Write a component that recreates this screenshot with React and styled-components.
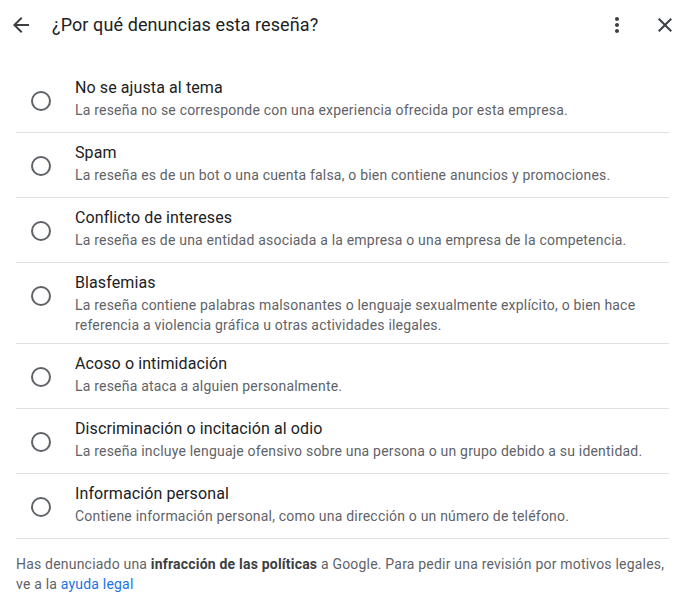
import React from "react";
import styled, { createGlobalStyle } from "styled-components";

const Global = createGlobalStyle`
  html, body { margin: 0; padding: 0; background: #fff; }
  body { font-family: Roboto, "Liberation Sans", Arial, sans-serif; -webkit-font-smoothing: antialiased; }
  * { box-sizing: border-box; }
`;

const Dialog = styled.div`
  width: 678px;
  background: #fff;
`;

const Header = styled.header`
  display: flex;
  align-items: center;
  height: 50px;
  padding: 0 1px 0 9px;
`;

const IconButton = styled.button`
  display: flex;
  align-items: center;
  justify-content: center;
  width: 24px;
  height: 24px;
  padding: 0;
  border: 0;
  background: none;
  color: ${(p) => p.$color || "#3c4043"};
  cursor: pointer;
  margin-left: ${(p) => p.$gap || 0}px;
  svg { width: 24px; height: 24px; fill: currentColor; }
`;

const Title = styled.h1`
  flex: 1;
  margin: 0 0 0 19px;
  font-size: 18px;
  font-weight: 400;
  color: #202124;
  line-height: 24px;
  letter-spacing: 0.1px;
`;

const List = styled.ul`
  list-style: none;
  margin: 18px 9px 0 16px;
  padding: 0;
`;

const Row = styled.li`
  display: flex;
  align-items: flex-start;
  border-bottom: 1px solid #e0e0e0;
  cursor: pointer;
`;

const RadioCell = styled.div`
  flex: none;
  width: 59px;
  height: 64px;
  display: flex;
  align-items: center;
  padding: 1px 0 0 15px;
`;

const Radio = styled.span`
  display: block;
  width: 20px;
  height: 20px;
  border: 2px solid #5f6368;
  border-radius: 50%;
`;

const Texts = styled.div`
  padding: 8px 0;
`;

const OptionTitle = styled.div`
  font-size: 16px;
  line-height: 24px;
  color: #202124;
  letter-spacing: 0.1px;
`;

const OptionDesc = styled.div`
  font-size: 14px;
  line-height: 20px;
  color: #5f6368;
  letter-spacing: 0.2px;
`;

const Footer = styled.p`
  margin: 15px 9px 0 16px;
  font-size: 14px;
  line-height: 20px;
  color: #5f6368;
  letter-spacing: 0.2px;
  b { font-weight: 700; color: #3c4043; }
  a { color: #1a73e8; text-decoration: none; }
`;

const options = [
  {
    title: "No se ajusta al tema",
    desc: "La reseña no se corresponde con una experiencia ofrecida por esta empresa.",
  },
  {
    title: "Spam",
    desc: "La reseña es de un bot o una cuenta falsa, o bien contiene anuncios y promociones.",
  },
  {
    title: "Conflicto de intereses",
    desc: "La reseña es de una entidad asociada a la empresa o una empresa de la competencia.",
  },
  {
    title: "Blasfemias",
    desc: "La reseña contiene palabras malsonantes o lenguaje sexualmente explícito, o bien hace referencia a violencia gráfica u otras actividades ilegales.",
  },
  {
    title: "Acoso o intimidación",
    desc: "La reseña ataca a alguien personalmente.",
  },
  {
    title: "Discriminación o incitación al odio",
    desc: "La reseña incluye lenguaje ofensivo sobre una persona o un grupo debido a su identidad.",
  },
  {
    title: "Información personal",
    desc: "Contiene información personal, como una dirección o un número de teléfono.",
  },
];

export default function App() {
  return (
    <Dialog>
      <Global />
      <Header>
        <IconButton aria-label="Atrás">
          <svg viewBox="0 0 24 24">
            <path d="M20 11H7.83l5.59-5.59L12 4l-8 8 8 8 1.41-1.41L7.83 13H20v-2z" />
          </svg>
        </IconButton>
        <Title>¿Por qué denuncias esta reseña?</Title>
        <IconButton aria-label="Más opciones">
          <svg viewBox="0 0 24 24">
            <path d="M12 8c1.1 0 2-.9 2-2s-.9-2-2-2-2 .9-2 2 .9 2 2 2zm0 2c-1.1 0-2 .9-2 2s.9 2 2 2 2-.9 2-2-.9-2-2-2zm0 6c-1.1 0-2 .9-2 2s.9 2 2 2 2-.9 2-2-.9-2-2-2z" />
          </svg>
        </IconButton>
        <IconButton aria-label="Cerrar" $gap={24}>
          <svg viewBox="0 0 24 24">
            <path d="M19 6.41L17.59 5 12 10.59 6.41 5 5 6.41 10.59 12 5 17.59 6.41 19 12 13.41 17.59 19 19 17.59 13.41 12z" />
          </svg>
        </IconButton>
      </Header>
      <List>
        {options.map((o) => (
          <Row key={o.title}>
            <RadioCell>
              <Radio />
            </RadioCell>
            <Texts>
              <OptionTitle>{o.title}</OptionTitle>
              <OptionDesc>{o.desc}</OptionDesc>
            </Texts>
          </Row>
        ))}
      </List>
      <Footer>
        Has denunciado una <b>infracción de las políticas</b> a Google. Para pedir una
        revisión por motivos legales, ve a la <a href="#">ayuda legal</a>
      </Footer>
    </Dialog>
  );
}
